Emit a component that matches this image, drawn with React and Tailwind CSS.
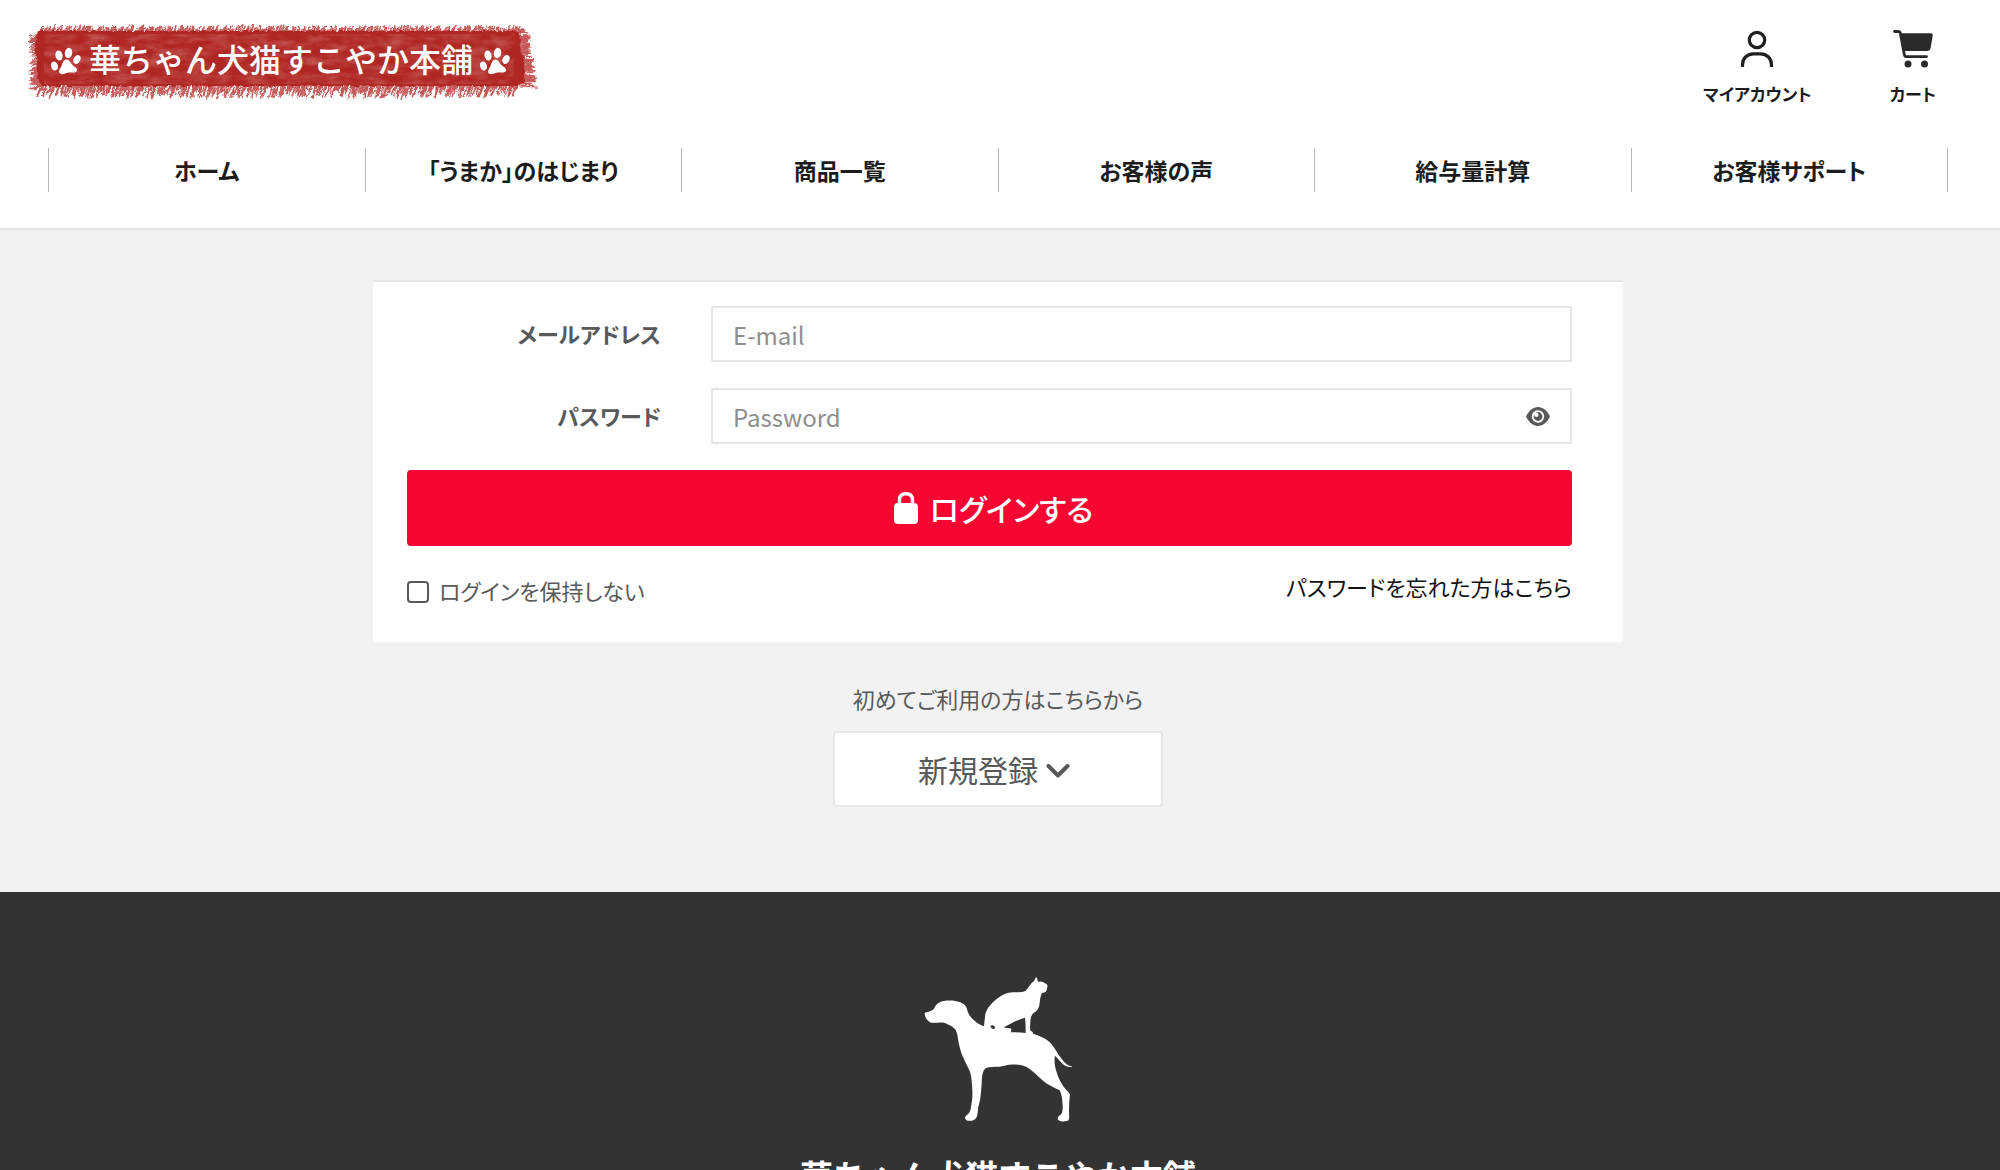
import React from "react";

const NAV = [
  "ホーム",
  "「うまか」のはじまり",
  "商品一覧",
  "お客様の声",
  "給与量計算",
  "お客様サポート",
];

const noise = (n) => {
  const v = Math.sin(n * 127.1 + 11.7) * 43758.5453;
  return v - Math.floor(v);
};

// Short bristle strokes around the painted banner.
function bristles() {
  const out = [];
  for (let i = 0; i < 420; i++) {
    const x = 10 + (i / 420) * 480;
    const a = noise(i);
    const b = noise(i + 900);
    out.push(`M${x} 10 l${1 + a * 4} ${-4 - b * 5}`);
    out.push(`M${x + 3} 58 l${-2 - a * 5} ${7 + b * 10}`);
  }
  for (let i = 0; i < 90; i++) {
    const y = 8 + (i / 90) * 54;
    const a = noise(i + 300);
    const b = noise(i + 500);
    out.push(`M14 ${y} l${-5 - a * 8} ${1 + b * 4}`);
    out.push(`M486 ${y} l${8 + a * 6 + y / 6} ${-5 + b * 8}`);
  }
  return out.join(" ");
}

function Paw({ transform }) {
  return (
    <g transform={transform} fill="#fff">
      <ellipse cx="3.5" cy="18" rx="3.3" ry="4.4" transform="rotate(-20 3.5 18)" />
      <ellipse cx="8" cy="7.5" rx="3.6" ry="5" transform="rotate(-12 8 7.5)" />
      <ellipse cx="17.5" cy="5" rx="3.7" ry="5.2" transform="rotate(10 17.5 5)" />
      <ellipse cx="26" cy="11.5" rx="3.3" ry="4.7" transform="rotate(25 26 11.5)" />
      <path d="M15.5 11.5 C18 11.5 19 14 21 16.5 C23 19 26.5 19.5 26 22.5 C25.5 25.5 21 24 17.5 24.5 C14 25 11.5 27.5 9 25.5 C6.5 23.5 9.5 20.5 10.5 18 C11.5 15 12.5 11.5 15.5 11.5Z" />
    </g>
  );
}

function BrandBanner() {
  return (
    <svg width="514" height="78" viewBox="0 0 514 78" role="img" aria-label="華ちゃん犬猫すこやか本舗">
      <defs>
        <filter id="grain" x="0" y="0" width="100%" height="100%">
          <feTurbulence type="fractalNoise" baseFrequency="0.05 0.12" numOctaves="4" seed="4" />
          <feColorMatrix values="0 0 0 0 1  0 0 0 0 0.85  0 0 0 0 0.85  0.9 0 0 0 -0.32" />
        </filter>
        <filter id="rough" x="-5%" y="-20%" width="110%" height="140%">
          <feTurbulence type="fractalNoise" baseFrequency="0.25" numOctaves="2" seed="7" result="n" />
          <feDisplacementMap in="SourceGraphic" in2="n" scale="4" xChannelSelector="R" yChannelSelector="G" />
          <feGaussianBlur stdDeviation="0.7" />
        </filter>
      </defs>
      <g filter="url(#rough)">
        <path d={bristles()} stroke="#b32421" strokeWidth="1.3" strokeOpacity="0.75" fill="none" />
        <path d="M10 7 L489 7 L493 14 L492 26 L496 36 L496 48 L497 58 L489 62 L14 62 L9 54 L9 40 L7 26 L8 12Z" fill="#b02522" />
      </g>
      <rect x="16" y="10" width="470" height="50" filter="url(#grain)" opacity="0.5" />
      <Paw transform="translate(23 24)" />
      <text x="61" y="48" fill="#fff" className="font-['Noto_Sans_CJK_JP',sans-serif] text-[32px] font-medium">
        華ちゃん犬猫すこやか本舗
      </text>
      <Paw transform="translate(452 24)" />
    </svg>
  );
}

function AccountIcon() {
  return (
    <svg width="40" height="40" viewBox="0 0 40 40" fill="none" stroke="#1f1f1f" strokeWidth="3.2" aria-hidden="true">
      <circle cx="20" cy="10" r="7.7" />
      <path d="M5.500 37 V35 C5.500 28 10.500 23.800 16.500 23.800 H23.500 C29.500 23.800 34.500 28 34.500 35 V37" />
    </svg>
  );
}

function CartIcon() {
  return (
    <svg width="40" height="40" viewBox="0 0 40 40" aria-hidden="true">
      <path d="M1.500 1.500 H5.500 Q7 1.500 7.300 3 L11.300 24.500 Q11.700 26.700 13.500 26.700 H33.500" fill="none" stroke="#2b2a28" strokeWidth="2.8" strokeLinecap="round" />
      <path d="M8 3.200 H38 Q40 3.200 39.700 5.500 L37.700 17.500 Q37 21 34 21 H11Z" fill="#2b2a28" />
      <circle cx="15" cy="34" r="3.5" fill="#2b2a28" />
      <circle cx="31.500" cy="34" r="3.5" fill="#2b2a28" />
    </svg>
  );
}

function EyeIcon() {
  return (
    <svg width="24" height="19" viewBox="0 0 24 19" aria-hidden="true">
      <path d="M0 9.500 C3 3.500 7 0 12 0 S21 3.500 24 9.500 C21 15.500 17 19 12 19 S3 15.500 0 9.500Z" fill="#58595b" />
      <circle cx="12" cy="9.500" r="5.300" fill="#58595b" stroke="#fff" strokeWidth="1.8" />
      <circle cx="10.300" cy="7.700" r="2.200" fill="#fff" />
    </svg>
  );
}

function LockIcon() {
  return (
    <svg width="24" height="32" viewBox="0 0 24 32" aria-hidden="true">
      <rect x="0" y="11" width="24" height="21" rx="4" fill="#fff" />
      <path d="M5.500 13 V8 C5.500 4 8 1.700 12 1.700 S18.500 4 18.500 8 V13" fill="none" stroke="#fff" strokeWidth="3.4" />
    </svg>
  );
}

function ChevronIcon() {
  return (
    <svg className="mt-1" width="24" height="14" viewBox="0 0 24 14" fill="none" stroke="#58595b" strokeWidth="4" strokeLinecap="round" strokeLinejoin="round" aria-hidden="true">
      <path d="M2.500 2 L12 11.500 L21.500 2" />
    </svg>
  );
}

function DogAndCat() {
  return (
    <svg className="shrink-0" width="150" height="148" viewBox="70 45 450 444" fill="#fff" aria-hidden="true">
      <path d="M75 163 C74 160 76 158 80 157 C90 155 98 152 103 146 C108 134 118 125 133 123 C150 120 168 122 180 126 C192 130 200 138 202 147 C204 158 209 167 217 175 C228 187 240 195 253 199 C254 187 255 176 257 163 C262 143 281 123 303 109 C320 98 335 97 350 97 C362 97 372 96 378 92 C384 86 389 76 396 69 C402 64 405 62 406 57 C407 52 412 50 413 57 C413 61 414 64 416 65 C424 64 432 66 436 70 C444 73 445 79 442 85 C442 93 438 98 427 99 C423 106 421 118 420 128 C419 143 413 152 402 159 C394 165 392 176 392 190 C391 200 391 209 393 213 C398 214 400 217 400 221 C415 225 430 232 441 239 C454 247 463 262 470 273 C480 291 492 306 503 314 C509 317 515 318 518 320 C510 322 500 320 492 314 C482 306 475 295 466 287 C463 300 465 317 470 334 C476 354 484 370 493 382 C500 391 510 398 511 405 C509 417 508 436 508 455 C508 465 510 473 507 480 C500 486 481 486 475 479 C472 474 476 468 483 464 C489 458 489 448 489 438 C488 420 487 404 480 391 C463 382 445 375 430 362 C412 346 397 331 381 321 C360 313 335 311 315 317 C295 323 272 317 258 325 C247 334 247 352 246 371 C244 392 244 410 239 430 C233 446 236 460 231 471 C227 481 215 484 203 482 C195 479 194 470 201 466 C209 461 213 450 214 440 C217 425 219 410 218 393 C217 370 216 350 211 335 C200 310 185 286 180 261 C174 236 174 221 168 210 C161 199 148 195 136 189 C121 185 105 190 94 188 C84 184 77 174 75 163Z" />
      <path d="M272 199 C276 193 286 196 286 204 C283 209 275 207 272 199Z" fill="#333" />
      <path d="M312 202 C332 193 353 178 376 173 C378 190 378 205 378 219 C363 218 350 216 334 217 L335 206 C327 204 320 204 312 202Z" fill="#333" />
    </svg>
  );
}

const LABEL = "w-[262px] shrink-0 pb-0.5 text-right text-[22px] leading-8 font-bold";
const FIELD =
  "h-14 w-full border-2 border-[#e3e5e6] bg-white px-5 text-2xl font-normal text-[#58595b] placeholder:text-[#8e8e8e] placeholder:opacity-100 outline-none";

export default function App() {
  return (
    <div className="min-h-screen bg-[#f2f2f3] font-['Noto_Sans_CJK_JP',sans-serif] text-[#58595b] [font-feature-settings:'palt']">
      <header className="border-b-2 border-[#e4e5e6] bg-white pb-9 text-[#1c1c1c]">
        <div className="flex h-[148px] items-start justify-between pt-6 pr-16 pl-7">
          <a href="#home" className="[font-feature-settings:normal]">
            <BrandBanner />
          </a>
          <div className="flex gap-[78px] pt-1.5 text-[17px] leading-6 font-bold">
            <a href="#account" className="flex flex-col items-center gap-3">
              <AccountIcon />
              マイアカウント
            </a>
            <a href="#cart" className="flex flex-col items-center gap-3">
              <CartIcon />
              カート
            </a>
          </div>
        </div>
        <nav className="mr-[52px] ml-12">
          <ul className="flex border-l border-[#b5b5b5]">
            {NAV.map((item) => (
              <li key={item} className="flex-1 border-r border-[#b5b5b5]">
                <a href="#nav" className="flex h-11 items-center justify-center text-[23px] font-bold">
                  {item}
                </a>
              </li>
            ))}
          </ul>
        </nav>
      </header>

      <main className="flex flex-col items-center pt-[50px] pr-1 pb-[85px]">
        <form className="w-full max-w-[1250px] border-t-2 border-[#e6e7e8] bg-white pt-6 pr-[51px] pb-9 pl-[34px]" onSubmit={(e) => e.preventDefault()}>
          <div className="-ml-2 flex items-center gap-[50px]">
            <label htmlFor="email" className={LABEL}>メールアドレス</label>
            <input id="email" type="email" placeholder="E-mail" className={FIELD} />
          </div>
          <div className="mt-[26px] -ml-2 flex items-center gap-[50px]">
            <label htmlFor="password" className={LABEL}>パスワード</label>
            <div className="relative w-full">
              <input id="password" type="password" placeholder="Password" className={FIELD} />
              <button type="button" aria-label="パスワードを表示" className="absolute inset-y-0 right-[22px] flex items-center">
                <EyeIcon />
              </button>
            </div>
          </div>
          <button type="submit" className="mt-[26px] flex h-[76px] w-full items-center justify-center gap-3 rounded bg-[#f60731] pl-2 text-[30px] font-medium text-white">
            <LockIcon />
            ログインする
          </button>
          <div className="mt-6 flex items-start justify-between text-[22px] leading-8">
            <label className="flex items-center gap-[10px] pt-1">
              <input type="checkbox" className="mt-1 size-[22px] appearance-none rounded border-2 border-[#58595b] bg-white" />
              ログインを保持しない
            </label>
            <a href="#forgot" className="text-[#111]">パスワードを忘れた方はこちら</a>
          </div>
        </form>

        <p className="mt-10 text-[22px] leading-8">初めてご利用の方はこちらから</p>
        <button type="button" className="mt-[17px] flex h-[76px] w-[330px] items-center justify-center gap-2 rounded border-2 border-[#e6e8e8] bg-white pr-2 text-3xl">
          新規登録
          <ChevronIcon />
        </button>
      </main>

      <footer className="flex flex-col items-center bg-[#333] pt-[83px] pr-1 pb-16 text-white">
        <DogAndCat />
        <p className="mt-7 text-[33px] leading-[48px] font-bold [font-feature-settings:normal]">華ちゃん犬猫すこやか本舗</p>
      </footer>
    </div>
  );
}
